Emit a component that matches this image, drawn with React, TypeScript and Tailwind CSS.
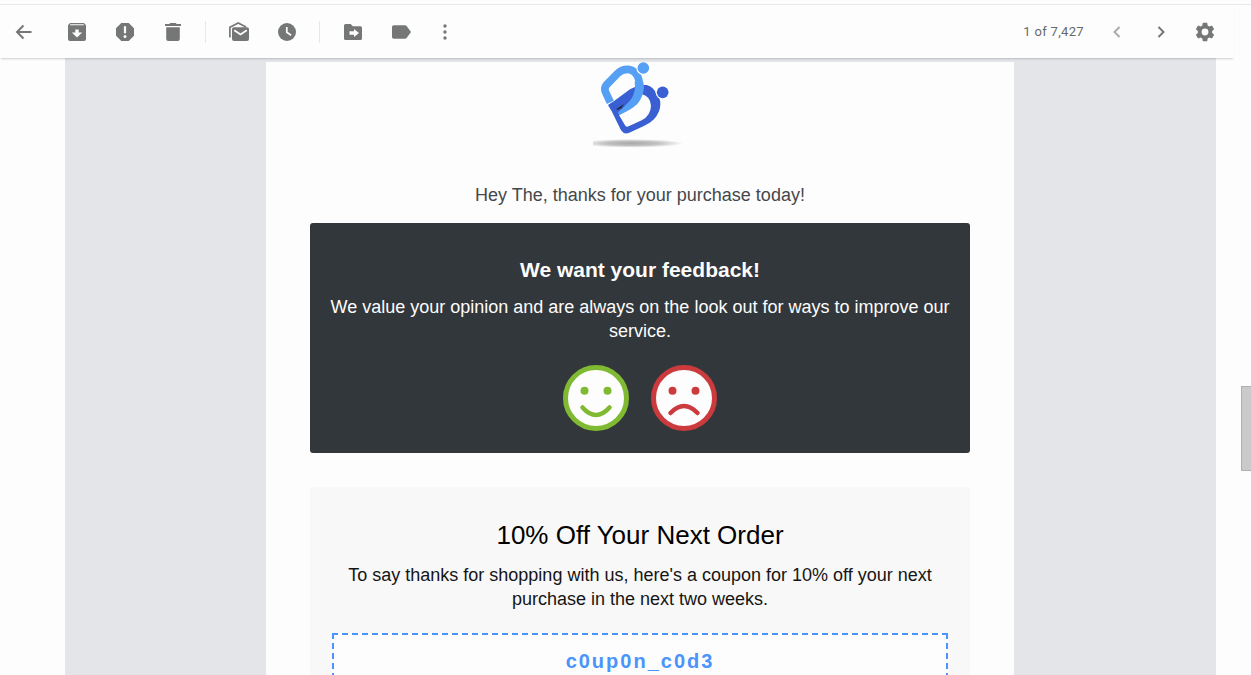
import type { ReactNode } from "react";

function Icon({ children, className = "size-6" }: { children: ReactNode; className?: string }) {
  return (
    <svg viewBox="0 0 24 24" fill="currentColor" aria-hidden="true" className={className}>
      {children}
    </svg>
  );
}

function ToolButton({
  label,
  children,
  className = "w-12 text-[#757776]",
}: {
  label: string;
  children: ReactNode;
  className?: string;
}) {
  return (
    <button type="button" aria-label={label} className={`flex h-10 shrink-0 items-center justify-center ${className}`}>
      {children}
    </button>
  );
}

function Divider() {
  return <div className="mr-[9px] ml-2 h-[22px] w-px shrink-0 bg-[#e6e7e8]" />;
}

function Toolbar() {
  return (
    <header className="z-10 flex h-[53px] shrink-0 items-center bg-[#fdfdfd] pt-px shadow-[0_2px_2px_-1px_rgba(60,64,67,0.25)]">
      <div className="mr-[5px] flex">
        <ToolButton label="Back">
          <Icon>
            <path d="M19.5 12H5.500M11.500 5.500L5 12l6.500 6.500" fill="none" stroke="currentColor" strokeWidth="2" />
          </Icon>
        </ToolButton>
      </div>
      <ToolButton label="Archive">
        <Icon>
          <path
            fillRule="evenodd"
            d="M5 3h14l2 2.200V19a2 2 0 0 1-2 2H5a2 2 0 0 1-2-2V5.200zM5.500 4.300l-.7.900h14.400l-.7-.9zM10.300 9.500v3H6.800L12 17.600l5.200-5.100h-3.500v-3z"
          />
        </Icon>
      </ToolButton>
      <ToolButton label="Report spam">
        <Icon>
          <path
            fillRule="evenodd"
            d="M8.270 3h7.460L21 8.270v7.460L15.730 21H8.270L3 15.730V8.270zM10.900 6.200v7h2.200v-7zM12 15.100a1.500 1.500 0 1 0 0 3 1.500 1.500 0 0 0 0-3z"
          />
        </Icon>
      </ToolButton>
      <ToolButton label="Delete">
        <Icon>
          <path d="M9.300 3h5.400l1 1H20v2H4V4h4.300zM5.200 7.200h13.600V19a2 2 0 0 1-2 2H7.200a2 2 0 0 1-2-2z" />
        </Icon>
      </ToolButton>
      <Divider />
      <ToolButton label="Mark as unread">
        <Icon>
          <path d="M2.900 17.500V7.300L11.200 3l7.800 4" fill="none" stroke="currentColor" strokeWidth="1.700" />
          <path d="M7 7.200h13a2 2 0 0 1 2 2V19a2 2 0 0 1-2 2H7a2 2 0 0 1-2-2V9.200a2 2 0 0 1 2-2z" />
          <path d="M7.200 10.200l6.300 4.300 6.300-4.300" fill="none" stroke="#fdfdfd" strokeWidth="1.800" />
        </Icon>
      </ToolButton>
      <ToolButton label="Snooze">
        <Icon>
          <circle cx="12" cy="12" r="9" />
          <path d="M11.800 7v5.300l4.300 2.900" fill="none" stroke="#fdfdfd" strokeWidth="1.700" />
        </Icon>
      </ToolButton>
      <Divider />
      <ToolButton label="Move to">
        <Icon>
          <path
            fillRule="evenodd"
            d="M4.500 4h5.200l2 2.200h7.800A1.500 1.500 0 0 1 21 7.700v10.800a1.500 1.500 0 0 1-1.500 1.500h-15A1.500 1.500 0 0 1 3 18.500v-13A1.500 1.500 0 0 1 4.500 4zM13 9v2.300H8.500v3.400H13V17l5-4z"
          />
        </Icon>
      </ToolButton>
      <ToolButton label="Labels">
        <Icon>
          <path d="M4.800 5.200H16a2 2 0 0 1 1.600.8L22 12l-4.400 6a2 2 0 0 1-1.600.8H4.800A1.800 1.800 0 0 1 3 17V7a1.800 1.800 0 0 1 1.800-1.800z" />
        </Icon>
      </ToolButton>
      <ToolButton label="More" className="w-10 text-[#757776]">
        <Icon>
          <circle cx="12" cy="6" r="1.700" />
          <circle cx="12" cy="12" r="1.700" />
          <circle cx="12" cy="18" r="1.700" />
        </Icon>
      </ToolButton>

      <div className="ml-auto flex items-center pr-[7px]">
        <span className="mr-[11px] font-[Roboto,sans-serif] text-[13px] leading-5 tracking-wide text-[#66696c]">
          1 of 7,427
        </span>
        <ToolButton label="Newer" className="w-11 text-[#a9abac]">
          <Icon>
            <path d="M14.500 7L9.500 12l5 5" fill="none" stroke="currentColor" strokeWidth="2" />
          </Icon>
        </ToolButton>
        <ToolButton label="Older" className="w-11 text-[#757776]">
          <Icon>
            <path d="M9.500 7l5 5-5 5" fill="none" stroke="currentColor" strokeWidth="2" />
          </Icon>
        </ToolButton>
        <ToolButton label="Settings" className="w-11 text-[#757776]">
          <Icon className="size-[22px]">
            <path
              fillRule="evenodd"
              d="M9.600 2h4.800l.5 2.900 1.900 1.100 2.800-1 2.400 4.100-2.200 1.900v2l2.200 1.900-2.400 4.100-2.800-1-1.900 1.100-.5 2.900H9.600l-.5-2.900L7.200 18l-2.800 1L2 14.900 4.200 13v-2L2 9.100 4.400 5l2.800 1 1.900-1.100zM12 8.300a3.700 3.700 0 1 0 0 7.400 3.700 3.700 0 0 0 0-7.400z"
            />
          </Icon>
        </ToolButton>
      </div>
    </header>
  );
}

function Logo() {
  return (
    <svg viewBox="0 21 360 279" role="img" aria-label="Company logo" className="h-[93px] w-[120px] shrink-0">
      <defs>
        <radialGradient id="logo-shadow">
          <stop offset="0" stopColor="#aaa8a8" />
          <stop offset="0.5" stopColor="#c0bebe" />
          <stop offset="1" stopColor="#fdfdfd" />
        </radialGradient>
        <clipPath id="shadow-clip">
          <rect x="39" y="240" width="290" height="50" />
        </clipPath>
      </defs>
      <ellipse cx="155" cy="265" rx="155" ry="13" fill="url(#logo-shadow)" clipPath="url(#shadow-clip)" />
      <path
        fillRule="evenodd"
        fill="#3a5fd3"
        d="M86 150L150 103Q176 88 200 90Q222 96 228 116Q242 128 241 150Q240 172 222 193Q210 205 190 214L146 234Q132 239 123 226ZM117 180L136 212Q139 217 146 214L185 196Q212 182 213 152Q211 124 186 118Q174 148 150 162Z"
      />
      <path d="M109 162L132 147L124 160L112 165Z" fill="#252b3f" />
      <path
        fill="#559ff4"
        d="M190 80Q194 96 190 110Q184 138 164 154Q146 168 117 180L114 172Q138 150 152 134Q164 118 165 96L164 80Z"
      />
      <path
        fill="none"
        stroke="#559ff4"
        strokeWidth="23"
        strokeLinejoin="round"
        d="M91 142L77 112Q71 100 79 90L113 55Q126 42 145 43Q164 45 173 64Q178 76 178 92"
      />
      <path d="M84 150L98 141L104 156L93 165Z" fill="#3a5fd3" />
      <circle cx="190" cy="39" r="21" fill="#fdfdfd" />
      <circle cx="248" cy="112" r="21" fill="#fdfdfd" />
      <circle cx="190" cy="39" r="17.500" fill="#559ff4" />
      <circle cx="248" cy="112" r="17.500" fill="#3a5fd3" />
    </svg>
  );
}

function Face({ color, mouth }: { color: string; mouth: string }) {
  return (
    <svg viewBox="-33 -33 66 66" aria-hidden="true" className="size-[66px]">
      <circle r="30.500" fill="#fdfdfd" stroke={color} strokeWidth="5" />
      <circle cx="-11.500" cy="-7.300" r="4" fill={color} />
      <circle cx="11.500" cy="-7.300" r="4" fill={color} />
      <path d={mouth} fill="none" stroke={color} strokeWidth="4.500" strokeLinecap="round" />
    </svg>
  );
}

function Feedback() {
  return (
    <section className="mt-4 rounded-[3px] bg-[#32373b] px-4 pt-8 pb-[22px] text-[#fdfdfd]">
      <h2 className="text-[21px] leading-[30px] font-bold">We want your feedback!</h2>
      <p className="mt-[10px] text-lg leading-6">
        We value your opinion and are always on the look out for ways to improve our service.
      </p>
      <div className="mt-[22px] flex justify-center gap-[22px]">
        <a href="#happy" aria-label="Happy">
          <Face color="#80b932" mouth="M-13.500 9.500Q0 24.500 13.500 9.500" />
        </a>
        <a href="#unhappy" aria-label="Unhappy">
          <Face color="#cb3a3c" mouth="M-13.500 15Q0 1 13.500 15" />
        </a>
      </div>
    </section>
  );
}

function Coupon() {
  return (
    <section className="mt-[34px] rounded-[3px] bg-[#f8f8f8] px-[22px] pt-8 pb-8 text-[#151515]">
      <h2 className="text-[26px] leading-8 text-black">10% Off Your Next Order</h2>
      <p className="mt-3 text-lg leading-6">
        To say thanks for shopping with us, here's a coupon for 10% off your next purchase in the next two weeks.
      </p>
      <div className="mt-[22px] border-2 border-dashed border-[#4a94fb] bg-[#fdfdfd] py-[14px] text-xl leading-6 font-bold tracking-widest text-[#4a94fb]">
        c0up0n_c0d3
      </div>
    </section>
  );
}

export default function App() {
  return (
    <div className="flex h-screen flex-col overflow-hidden bg-[#fdfdfd] font-['Liberation_Sans',Arial,sans-serif]">
      <div className="h-[5px] shrink-0 border-b border-[#e8e9ed]" />
      <div className="flex min-h-0 flex-1">
        <div className="flex min-w-0 flex-1 flex-col">
          <Toolbar />
          <main className="mr-[18px] ml-[65px] flex min-h-0 flex-1 justify-center overflow-hidden bg-[#e4e5e9] pt-1 pr-px">
            <article className="h-max w-full max-w-[748px] bg-[#fdfdfd] px-11 pb-11 text-center">
              <div className="flex justify-center">
                <Logo />
              </div>
              <p className="mt-7 text-lg leading-6 text-[#45484b]">Hey The, thanks for your purchase today!</p>
              <Feedback />
              <Coupon />
            </article>
          </main>
        </div>
        <div className="flex w-[17px] shrink-0 justify-end">
          <div className="mt-[381px] h-[85px] w-[10px] border border-r-0 border-[#b0b0b0] bg-[#cacaca]" />
        </div>
      </div>
    </div>
  );
}
